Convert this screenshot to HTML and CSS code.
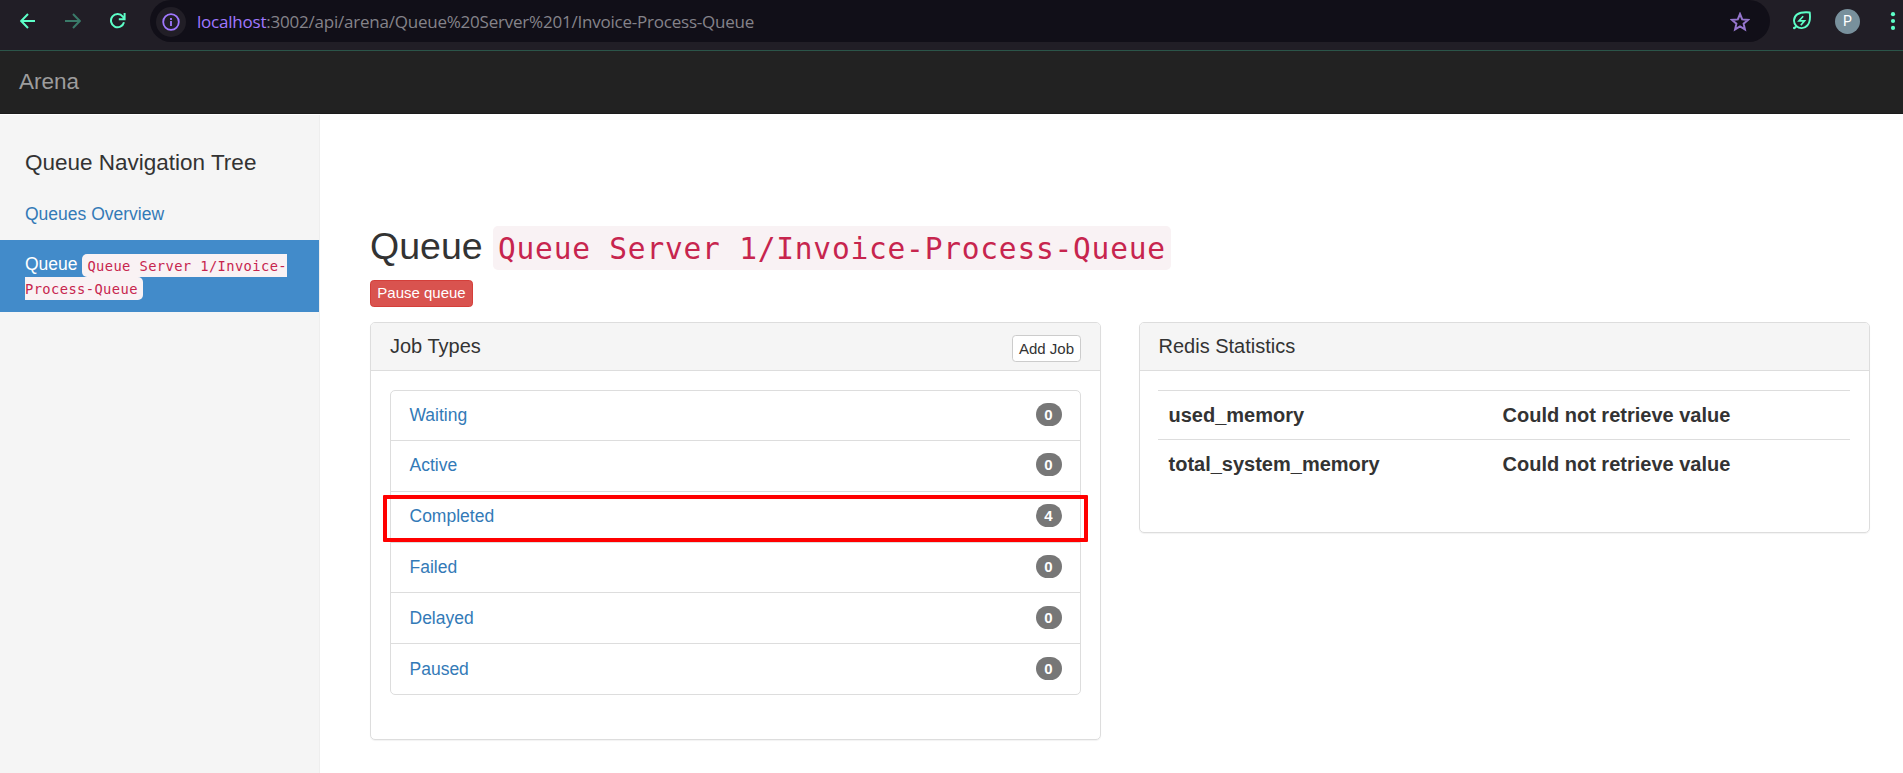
FILE: index.html
```
<!DOCTYPE html>
<html lang="en">
<head>
<meta charset="utf-8">
<title>Arena</title>
<link rel="stylesheet" href="styles.css">
</head>
<body>
<header class="browser">
  <div class="nav-buttons">
    <svg width="16" height="16" viewBox="0 0 16 16" class="stroke-mint"><path d="M15 8H1.5M8 1L1.2 8L8 15"/></svg>
    <svg width="16" height="16" viewBox="0 0 16 16" class="stroke-dim"><path d="M0 8H14.5M8 1L14.8 8L8 15"/></svg>
    <svg width="16" height="16" viewBox="0 0 16 16" class="stroke-mint"><path d="M14 9.3A6.6 6.6 0 1 1 12.8 3.6L14.3 5.4M14.6 0V6.2H8.8"/></svg>
  </div>
  <div class="address">
    <span class="site-info"><svg width="18" height="18" viewBox="0 0 18 18"><circle cx="9" cy="9" r="7.8" fill="none" stroke="#a078ff" stroke-width="1.8"/><path d="M9 8v5M9 5v1.9" fill="none" stroke="#a078ff" stroke-width="1.8"/></svg></span>
    <span class="url"><span class="host">localhost</span>:3002/api/arena/Queue%20Server%201/Invoice-Process-Queue</span>
    <svg class="star" width="20" height="20" viewBox="0 0 20 20"><path d="M10 2L12.2 7.4L18 7.9L13.6 11.7L14.9 17.4L10 14.4L5.1 17.4L6.4 11.7L2 7.9L7.8 7.4Z" fill="none" stroke="#9575cd" stroke-width="2"/></svg>
  </div>
  <svg class="leaf" width="20" height="20" viewBox="0 0 20 20"><path d="M2.2 17.2L4.5 15.3C.8 12 1.4 6 5.2 3.4C8.5 1.2 13.5 1.1 17.7 1.5C18.3 6 18 11.5 15.3 14.5C12.3 17.8 7.5 18 4.5 15.3" fill="none" stroke="#5dffc8" stroke-width="1.9"/><path d="M11.2 5.2L7 9.8H12.5L8.8 14.2" fill="none" stroke="#5dffc8" stroke-width="1.7"/><circle cx="2.2" cy="17" r="1.2" fill="#5dffc8"/></svg>
  <span class="avatar">P</span>
  <svg class="dots" width="6" height="20" viewBox="0 0 6 20" fill="#5dffc8"><circle cx="3" cy="3.2" r="2.1"/><circle cx="3" cy="10" r="2.1"/><circle cx="3" cy="16.9" r="2.1"/></svg>
</header>
<nav class="navbar"><a class="brand">Arena</a></nav>
<div class="layout">
  <aside class="sidebar">
    <h4 class="sidebar-title">Queue Navigation Tree</h4>
    <a class="side-link">Queues Overview</a>
    <a class="side-link active">Queue <code class="code">Queue Server 1/Invoice-<br>Process-Queue</code></a>
  </aside>
  <main class="main">
    <h2 class="page-title">Queue <code class="code code-lg">Queue Server 1/Invoice-Process-Queue</code></h2>
    <button class="btn btn-danger">Pause queue</button>
    <div class="panels">
      <section class="panel jobs">
        <div class="panel-heading"><h3 class="panel-title">Job Types</h3><button class="btn btn-default">Add Job</button></div>
        <div class="list">
          <a class="item">Waiting<span class="badge">0</span></a>
          <a class="item">Active<span class="badge">0</span></a>
          <a class="item marked">Completed<span class="badge">4</span></a>
          <a class="item">Failed<span class="badge">0</span></a>
          <a class="item">Delayed<span class="badge">0</span></a>
          <a class="item">Paused<span class="badge">0</span></a>
        </div>
      </section>
      <section class="panel stats">
        <div class="panel-heading"><h3 class="panel-title">Redis Statistics</h3></div>
        <div class="table">
          <div class="row"><span class="key">used_memory</span><span>Could not retrieve value</span></div>
          <div class="row"><span class="key">total_system_memory</span><span>Could not retrieve value</span></div>
        </div>
      </section>
    </div>
  </main>
</div>
</body>
</html>
```
FILE: styles.css
```
* { box-sizing: border-box; }
body {
  margin: 0;
  height: 773px;
  overflow: hidden;
  background: #fff;
  color: #333;
  font: 17.5px/25px "Liberation Sans", Arial, sans-serif;
}
h2, h3, h4 { margin: 0; font-weight: 400; }
svg { display: block; flex: none; }

.browser {
  display: flex;
  align-items: center;
  height: 51px;
  padding: 0 7px 8px 20px;
  background: #211e26;
  border-bottom: 1px solid #2b5549;
}
.nav-buttons { display: flex; gap: 29px; width: 130px; }
.stroke-mint, .stroke-dim { fill: none; stroke: #5dffc8; stroke-width: 2; }
.stroke-dim { stroke: #3a7a69; }
.address {
  display: flex;
  align-items: center;
  width: 1620px;
  height: 42px;
  padding: 1px 20px 0 6px;
  background: #110f18;
  border-radius: 21px;
}
.site-info {
  display: flex;
  align-items: center;
  justify-content: center;
  width: 30px;
  height: 30px;
  border-radius: 50%;
  background: #211e26;
}
.url {
  margin-left: 11px;
  color: #85838a;
  font: 17px/24px "Open Sans", "Noto Sans", sans-serif;
  white-space: nowrap;
  letter-spacing: -0.22px;
}
.host { color: #a078ff; }
.star { margin-left: auto; }
.leaf { margin-left: 22px; }
.avatar {
  width: 25px;
  height: 25px;
  margin-left: 23px;
  border-radius: 50%;
  background: #78909c;
  color: #fff;
  font: 14px/25px Roboto, sans-serif;
  text-align: center;
}
.dots { margin-left: auto; }

.navbar {
  height: 63px;
  padding: 18px 19px 0;
  background: #222;
  border-bottom: 1px solid #1b1b1b;
}
.brand { display: block; color: #9d9d9d; font-size: 22.5px; line-height: 25px; }

.layout { display: flex; height: 659px; padding-top: 1px; }
.sidebar {
  width: 320px;
  padding-top: 35px;
  background: #f5f5f5;
  border-right: 1px solid #eee;
}
.sidebar-title { height: 40px; padding-left: 25px; font-size: 22.5px; line-height: 25px; }
.side-link { display: block; height: 50px; padding: 11.5px 25px 0; color: #337ab7; }
.side-link.active { height: 72px; padding-top: 13px; background: #428bca; color: #fff; line-height: 22.5px; }
.code {
  padding: 3.5px 5px;
  border-radius: 5px;
  background: #f9f2f4;
  color: #c7254e;
  font: 13.78px/22.5px "DejaVu Sans Mono", monospace;
  letter-spacing: 0.39px;
}
.code-lg { font-size: 29.53px; line-height: 41px; padding: 6px 5px 4px; letter-spacing: 0.78px; }

.main { width: 1583px; padding: 111px 33px 0 50px; }
.page-title { height: 54px; font-size: 37.5px; line-height: 41px; white-space: nowrap; }
.btn {
  display: block;
  height: 27px;
  padding: 0 6px;
  border: 1px solid #ccc;
  border-radius: 3.75px;
  background: #fff;
  color: #333;
  font: 15px/24px "Liberation Sans", Arial, sans-serif;
  white-space: nowrap;
}
.btn-danger { width: 103px; padding-bottom: 2px; background: #d9534f; border-color: #d43f3a; color: #fff; }
.btn-default { width: 69px; margin-top: 12px; }

.panels { display: flex; align-items: flex-start; justify-content: space-between; margin-top: 15px; }
.panel {
  width: 731px;
  border: 1px solid #ddd;
  border-radius: 5px;
  box-shadow: 0 1px 1px rgba(0, 0, 0, .05);
}
.jobs { height: 418px; }
.stats { height: 211px; }
.panel-heading {
  display: flex;
  justify-content: space-between;
  height: 48px;
  padding: 0 19px;
  background: #f5f5f5;
  border-bottom: 1px solid #ddd;
  border-radius: 4px 4px 0 0;
}
.stats .panel-heading { padding-left: 18.5px; }
.panel-title { padding-top: 12px; font-size: 20px; line-height: 22px; }
.list { margin: 19px 19px 0; border: 1px solid #ddd; border-radius: 5px; }
.item {
  position: relative;
  display: flex;
  align-items: center;
  justify-content: space-between;
  height: 50.8px;
  padding: 0 18.5px 0 18.5px;
  border-bottom: 1px solid #ddd;
  color: #337ab7;
}
.item:first-child { height: 50px; }
.item:last-child { height: 50px; border-bottom: 0; }
.badge {
  width: 26px;
  height: 23px;
  margin-bottom: 2px;
  border-radius: 12px;
  background: #777;
  color: #fff;
  font: bold 15px/23px "Liberation Sans", Arial, sans-serif;
  text-align: center;
}
.marked::after {
  content: "";
  position: absolute;
  inset: 3px -8px 0 -8px;
  border: 4px solid #f00;
  border-radius: 1px;
}
.table { margin: 19px 19px 0 18px; font-size: 20px; font-weight: 700; }
.row { display: flex; height: 49px; padding: 12px 10.5px 0; border-top: 1px solid #ddd; }
.key { width: 334px; }
```
